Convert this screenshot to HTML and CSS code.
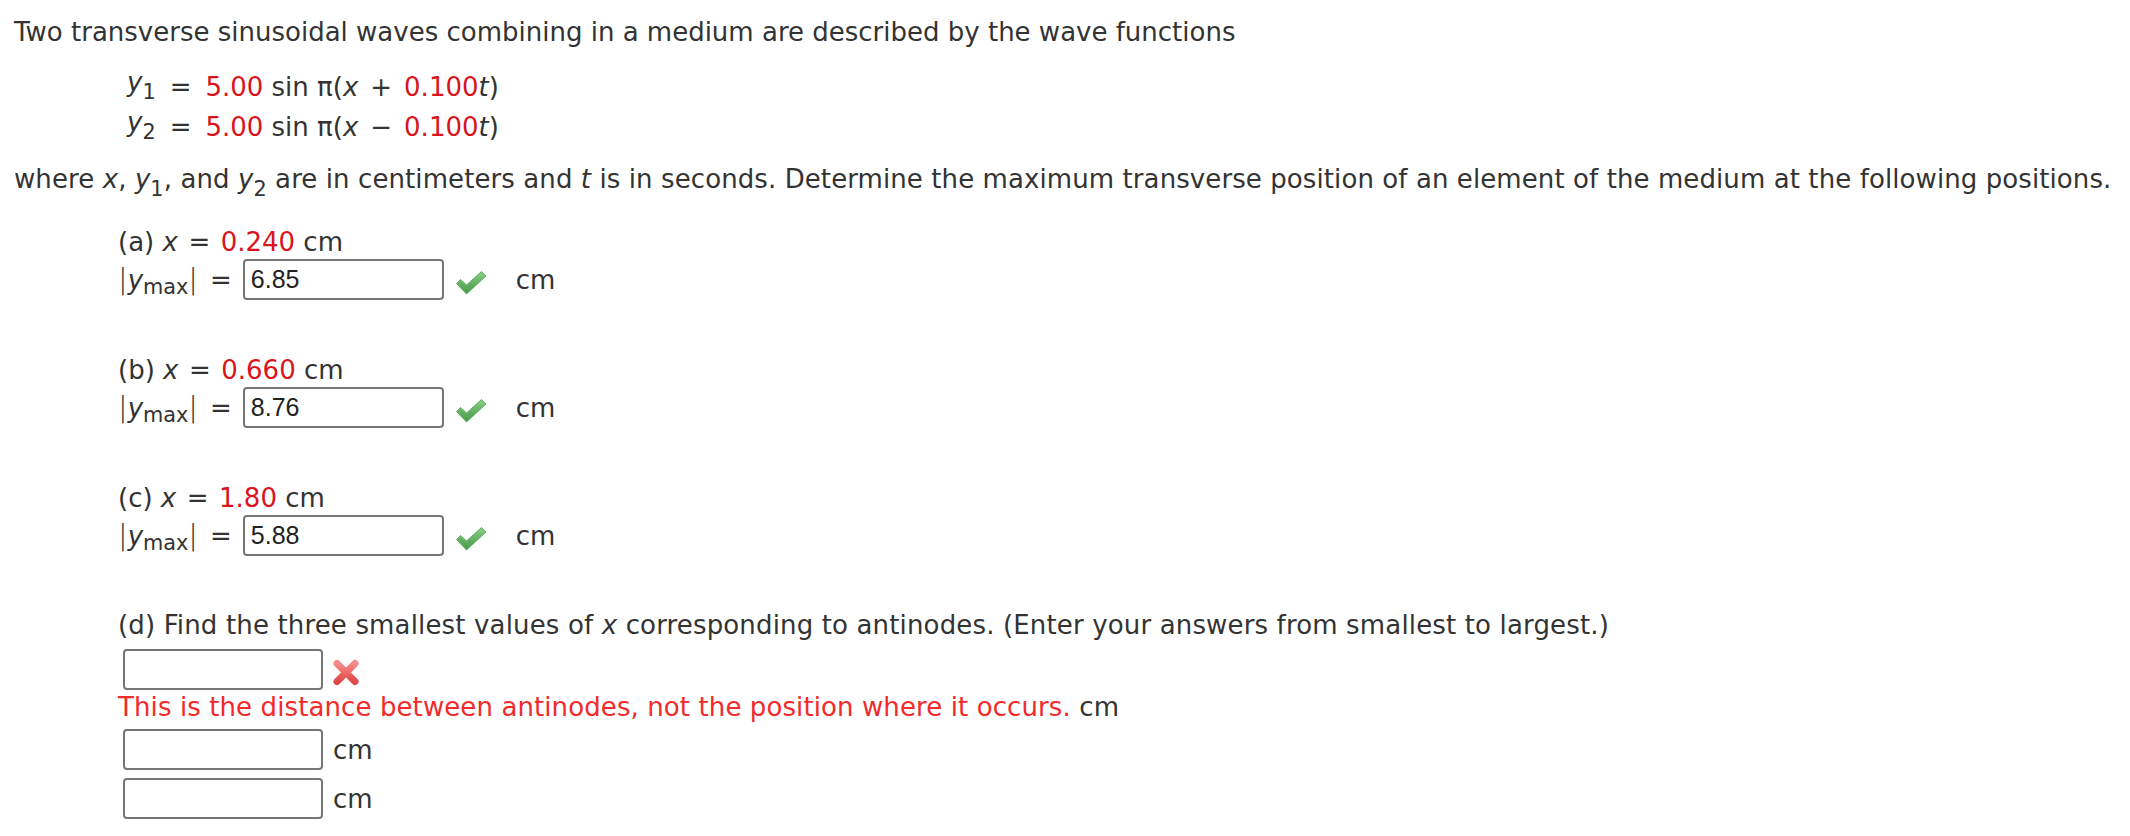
FILE: index.html
```html
<!DOCTYPE html>
<html lang="en">
<head>
<meta charset="utf-8">
<title>Transverse waves</title>
<link rel="stylesheet" href="styles.css">
</head>
<body>
<div class="page">
  <p class="line intro">Two transverse sinusoidal waves combining in a medium are described by the wave functions</p>

  <div class="eqs">
    <div class="eq">
      <span class="lhs"><i>y</i><sub class="esub">1</sub></span><span class="op">=</span><span class="rhs"><span class="red">5.00</span> sin π(<i>x</i><span class="pm">+</span><span class="red">0.100</span><i>t</i>)</span>
    </div>
    <div class="eq">
      <span class="lhs"><i>y</i><sub class="esub">2</sub></span><span class="op">=</span><span class="rhs"><span class="red">5.00</span> sin π(<i>x</i><span class="pm">−</span><span class="red">0.100</span><i>t</i>)</span>
    </div>
  </div>

  <p class="line where">where <i>x</i>, <i>y</i><sub>1</sub>, and <i>y</i><sub>2</sub> are in centimeters and <i>t</i> is in seconds. Determine the maximum transverse position of an element of the medium at the following positions.</p>

  <div class="part part-first">
    <p class="line label">(a) <i>x</i><span class="leq">=</span><span class="red">0.240</span> cm</p>
    <div class="answer">
      <span class="ylabel"><span class="bar">|</span><i>y</i><sub class="msub">max</sub><span class="bar">|</span><span class="yeq">=</span></span>
      <span class="box">6.85</span>
      <svg class="check" viewBox="0 0 32 25" width="32" height="25" aria-hidden="true"><defs><linearGradient id="g1" x1="0" y1="0" x2="0" y2="1"><stop offset="0" stop-color="#86cf86"/><stop offset="1" stop-color="#479a47"/></linearGradient></defs><path d="M1.5 13.5 L5.5 9.5 L11.5 15 L26.5 1.5 L31 6 L11.5 24 Z" fill="url(#g1)" stroke="#4f9f4f" stroke-width="0.8" stroke-linejoin="round"/></svg>
      <span class="unit">cm</span>
    </div>
  </div>

  <div class="part">
    <p class="line label">(b) <i>x</i><span class="leq">=</span><span class="red">0.660</span> cm</p>
    <div class="answer">
      <span class="ylabel"><span class="bar">|</span><i>y</i><sub class="msub">max</sub><span class="bar">|</span><span class="yeq">=</span></span>
      <span class="box">8.76</span>
      <svg class="check" viewBox="0 0 32 25" width="32" height="25" aria-hidden="true"><defs><linearGradient id="g2" x1="0" y1="0" x2="0" y2="1"><stop offset="0" stop-color="#86cf86"/><stop offset="1" stop-color="#479a47"/></linearGradient></defs><path d="M1.5 13.5 L5.5 9.5 L11.5 15 L26.5 1.5 L31 6 L11.5 24 Z" fill="url(#g2)" stroke="#4f9f4f" stroke-width="0.8" stroke-linejoin="round"/></svg>
      <span class="unit">cm</span>
    </div>
  </div>

  <div class="part">
    <p class="line label">(c) <i>x</i><span class="leq">=</span><span class="red">1.80</span> cm</p>
    <div class="answer">
      <span class="ylabel"><span class="bar">|</span><i>y</i><sub class="msub">max</sub><span class="bar">|</span><span class="yeq">=</span></span>
      <span class="box">5.88</span>
      <svg class="check" viewBox="0 0 32 25" width="32" height="25" aria-hidden="true"><defs><linearGradient id="g3" x1="0" y1="0" x2="0" y2="1"><stop offset="0" stop-color="#86cf86"/><stop offset="1" stop-color="#479a47"/></linearGradient></defs><path d="M1.5 13.5 L5.5 9.5 L11.5 15 L26.5 1.5 L31 6 L11.5 24 Z" fill="url(#g3)" stroke="#4f9f4f" stroke-width="0.8" stroke-linejoin="round"/></svg>
      <span class="unit">cm</span>
    </div>
  </div>

  <div class="part part-d">
    <p class="line label dlabel">(d) Find the three smallest values of <i>x</i> corresponding to antinodes. (Enter your answers from smallest to largest.)</p>
    <div class="drow drow-first">
      <span class="box box-empty"></span>
      <svg class="cross" viewBox="0 0 28 27" width="28" height="27" aria-hidden="true"><defs><linearGradient id="gx" x1="0" y1="0" x2="0" y2="1"><stop offset="0" stop-color="#f78a8a"/><stop offset="1" stop-color="#e04848"/></linearGradient></defs><path d="M5 4.5 L23 22.5 M23 4.5 L5 22.5" stroke="url(#gx)" stroke-width="7" stroke-linecap="round" fill="none"/></svg>
    </div>
    <p class="line err"><span class="errtext">This is the distance between antinodes, not the position where it occurs.</span> cm</p>
    <div class="drow drow-second">
      <span class="box box-empty"></span>
      <span class="dunit">cm</span>
    </div>
    <div class="drow drow-third">
      <span class="box box-empty"></span>
      <span class="dunit">cm</span>
    </div>
  </div>
</div>
</body>
</html>
```

FILE: styles.css
```css
html, body {
  margin: 0;
  padding: 0;
  background: #ffffff;
}

body {
  font-family: "DejaVu Sans", Verdana, sans-serif;
  font-size: 26px;
  color: #333333;
}

.page {
  padding: 16px 0 0 14px;
}

.line {
  margin: 0;
  line-height: 32px;
  white-space: nowrap;
}

i {
  font-style: italic;
}

sub {
  font-size: 0.8em;
  vertical-align: -8px;
  line-height: 0;
}

.red {
  color: #d9141b;
}

/* equations */
.eqs {
  margin: 19px 0 0 113px;
}

.eq {
  display: flex;
  align-items: baseline;
  line-height: 40px;
  height: 40px;
}

.lhs {
  display: inline-block;
  vertical-align: 5px;
}

.eq .lhs {
  transform: translateY(-5px);
}

.esub {
  font-size: 0.8em;
  vertical-align: -8px;
}

.op {
  margin: 0 14px;
}

.pm {
  margin: 0 12px;
}

.where {
  margin-top: 16px;
  letter-spacing: 0.09px;
}

/* parts */
.part {
  margin: 54px 0 0 104px;
}

.part-first {
  margin-top: 31px;
}

.leq {
  margin: 0 10.5px;
}

.answer {
  display: flex;
  align-items: center;
  margin-top: 1px;
  height: 41px;
}

.ylabel {
  line-height: 30px;
  white-space: nowrap;
}

.bar {
  font-size: 1.1em;
  font-weight: 300;
}

.msub {
  font-size: 0.8em;
  vertical-align: -5px;
}

.yeq {
  margin-left: 12px;
}

.box {
  box-sizing: border-box;
  display: flex;
  align-items: center;
  width: 201px;
  height: 41px;
  border: 2px solid #767676;
  border-radius: 4px;
  padding: 0 6px;
  font-family: "Liberation Sans", Arial, sans-serif;
  font-size: 25px;
  color: #222222;
  background: #ffffff;
}

.answer .box {
  margin-left: 11px;
}

.check {
  margin-left: 11px;
  margin-top: 6px;
  flex: none;
}

.unit {
  margin-left: 29px;
  line-height: 30px;
}

.part-d {
  margin-top: 53px;
}

.dlabel {
  letter-spacing: 0.15px;
}

.drow {
  display: flex;
  align-items: center;
  height: 41px;
}

.drow .box {
  width: 200px;
  margin-left: 5px;
}

.drow-first {
  margin-top: 8px;
}

.cross {
  margin-left: 9px;
  margin-top: 5px;
  flex: none;
}

.err {
  margin-top: 1px;
  letter-spacing: 0.1px;
}

.errtext {
  color: #f22a2a;
}

.drow-second {
  margin-top: 6px;
}

.drow-third {
  margin-top: 8px;
}

.dunit {
  margin-left: 10px;
  line-height: 30px;
}
```
